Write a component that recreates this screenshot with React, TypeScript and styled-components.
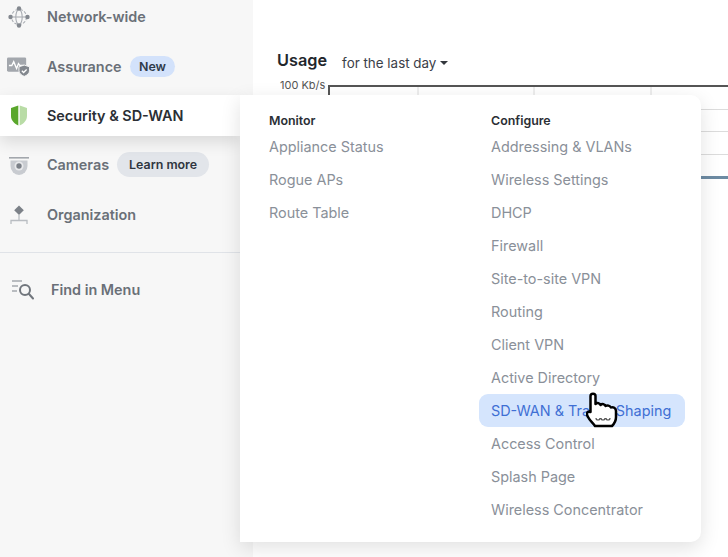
import styled, { createGlobalStyle } from "styled-components";

const GlobalStyle = createGlobalStyle`
  html, body {
    margin: 0;
    height: 100%;
    overflow: hidden;
    background: #fff;
    font-family: Inter, "Liberation Sans", sans-serif;
  }
`;

const monitorLinks = ["Appliance Status", "Rogue APs", "Route Table"];
const configureLinks = [
  "Addressing & VLANs",
  "Wireless Settings",
  "DHCP",
  "Firewall",
  "Site-to-site VPN",
  "Routing",
  "Client VPN",
  "Active Directory",
  "SD-WAN & Traffic Shaping",
  "Access Control",
  "Splash Page",
  "Wireless Concentrator",
];

const NetworkIcon = () => (
  <svg width="22" height="22" viewBox="0 0 22 22" fill="none" stroke="#a9adb3" strokeWidth="1.100">
    <circle cx="11" cy="11" r="7.500" strokeDasharray="3 1.500" />
    <ellipse cx="11" cy="11" rx="3.200" ry="7.500" />
    <path d="M3.500 11h15" />
    <g fill="#83888f" stroke="none">
      <circle cx="11" cy="2.500" r="2.200" />
      <circle cx="11" cy="19.500" r="2.200" />
      <circle cx="2.500" cy="11" r="2.200" />
      <circle cx="19.500" cy="11" r="2.200" />
    </g>
  </svg>
);

const AssuranceIcon = () => (
  <svg width="24" height="21" viewBox="0 0 24 21">
    <rect x="0" y="1" width="20" height="15" rx="1.500" fill="#a3a7ad" />
    <path d="M2 9.500h3l2-4 3 7 2-5 1.500 2H18" fill="none" stroke="#fff" strokeWidth="1.400" />
    <path d="M18 9l5.500 1.800V15c0 2.700-2.700 4.800-5.500 5.800-2.800-1-5.500-3.100-5.500-5.800v-4.200z" fill="#83888f" stroke="#f7f7f7" />
    <path d="M15.500 15l1.800 1.800 3.200-3.200" fill="none" stroke="#fff" strokeWidth="1.300" />
  </svg>
);

const ShieldIcon = () => (
  <svg width="18" height="21" viewBox="0 0 18 21">
    <path d="M8.300 0.500L1 3v8c0 4.500 3.500 7.800 7.300 9.500z" fill="#5aa72c" />
    <path d="M9.700 0.500L17 3v8c0 4.500-3.500 7.800-7.300 9.500z" fill="#b9dca6" />
  </svg>
);

const CameraIcon = () => (
  <svg width="20" height="20" viewBox="0 0 20 20">
    <rect x="0" y="2" width="20" height="1.600" fill="#a3a7ad" />
    <path d="M1.500 5.500h17v5.500a8.500 9 0 0 1-17 0z" fill="#c8cbd0" />
    <circle cx="10" cy="11" r="4.500" fill="#e8e9eb" />
    <circle cx="10" cy="11" r="2.700" fill="#7c8188" />
  </svg>
);

const OrganizationIcon = () => (
  <svg width="18" height="22" viewBox="0 0 18 22">
    <path d="M9 2.500l4.800 4.800L9 12.100 4.200 7.300z" fill="#7c8188" />
    <path d="M9 12v5M1 21v-3.500h16V21" fill="none" stroke="#b9bdc2" strokeWidth="1.300" />
  </svg>
);

const FindIcon = () => (
  <svg width="23" height="20" viewBox="0 0 23 20" fill="none">
    <path d="M1 1h10M1 6h6M1 11h5" stroke="#a5a9af" strokeWidth="1.300" />
    <circle cx="14" cy="10" r="5" stroke="#71767d" strokeWidth="2" />
    <path d="M18 14l4 4.500" stroke="#71767d" strokeWidth="2" strokeLinecap="round" />
  </svg>
);

const Caret = () => (
  <svg width="8" height="4" viewBox="0 0 8 4">
    <path d="M0 0h8L4 4z" fill="#33373d" />
  </svg>
);

const HandCursor = () => (
  <svg width="32" height="36" viewBox="0 0 32 36">
    <path
      d="M4.500 4C4.500 1 9.500 1 9.500 4V12C11 10.500 14 11 14.500 13C16 11.500 19 12 19.500 14C21 13 24 13.500 25 15.500C27 14.500 30 16 30 19V25C30 29 28 32 26 34H9C7 31 4 29 2 25C0 22 1 18.500 4.500 20Z"
      fill="#fff"
      stroke="#000"
      strokeWidth="2.500"
      strokeLinejoin="round"
    />
    <path d="M10 26a2 2 0 0 0 4 0M15 26a2 2 0 0 0 4 0M20 26a2 2 0 0 0 4 0" fill="none" stroke="#555" strokeWidth="1.200" />
  </svg>
);

const UsageChart = () => (
  <svg width="400" height="96" viewBox="0 0 400 96" fill="none">
    <path d="M1 96V1H400" stroke="#555" strokeWidth="2" />
    <path d="M90 2v92M206 2v92M323 2v92" stroke="#dcdcdc" />
    <path d="M2 24.500H400M2 46.500H400M2 69.500H400" stroke="#dcdcdc" />
    <path d="M2 92.500H400" stroke="#6d8ba3" strokeWidth="3" />
  </svg>
);

export default function App() {
  return (
    <Page>
      <GlobalStyle />
      <Sidebar>
        <NavItem>
          <NavIcon><NetworkIcon /></NavIcon>
          <NavLabel>Network-wide</NavLabel>
        </NavItem>
        <NavItem>
          <NavIcon><AssuranceIcon /></NavIcon>
          <NavLabel>Assurance</NavLabel>
          <NewBadge>New</NewBadge>
        </NavItem>
        <ActiveNavItem>
          <NavIcon><ShieldIcon /></NavIcon>
          <ActiveLabel>Security &amp; SD-WAN</ActiveLabel>
        </ActiveNavItem>
        <NavItem>
          <NavIcon><CameraIcon /></NavIcon>
          <NavLabel>Cameras</NavLabel>
          <LearnBadge>Learn more</LearnBadge>
        </NavItem>
        <NavItem>
          <NavIcon><OrganizationIcon /></NavIcon>
          <NavLabel>Organization</NavLabel>
        </NavItem>
        <Divider />
        <FindRow>
          <FindIcon />
          <NavLabel>Find in Menu</NavLabel>
        </FindRow>
      </Sidebar>

      <Main>
        <UsageHeader>
          <UsageTitle>Usage</UsageTitle>
          <RangeSelect>
            for the last day <Caret />
          </RangeSelect>
        </UsageHeader>
        <ChartRow>
          <AxisLabel>100 Kb/s</AxisLabel>
          <UsageChart />
        </ChartRow>
      </Main>

      <Flyout>
        <MenuColumn>
          <MenuHeading>Monitor</MenuHeading>
          {monitorLinks.map((link) => (
            <MenuLink key={link}>{link}</MenuLink>
          ))}
        </MenuColumn>
        <MenuColumn>
          <MenuHeading>Configure</MenuHeading>
          {configureLinks.map((link) => (
            <MenuLink key={link} $hover={link.startsWith("SD-WAN")}>
              {link}
            </MenuLink>
          ))}
        </MenuColumn>
      </Flyout>

      <CursorWrap>
        <HandCursor />
      </CursorWrap>
    </Page>
  );
}

const Page = styled.div`
  position: relative;
  display: flex;
  width: 728px;
  height: 557px;
  overflow: hidden;
  background: #fff;
`;

const Sidebar = styled.div`
  position: relative;
  width: 253px;
  flex: none;
  margin-top: -8px;
  background: #f7f7f7;
`;

const NavItem = styled.div`
  display: flex;
  align-items: center;
  height: 49.500px;
  padding-left: 7px;
  box-sizing: border-box;
`;

const ActiveNavItem = styled(NavItem)`
  position: relative;
  z-index: 2;
  width: 240px;
  height: 41px;
  margin: 4px 0;
  background: #fff;
  box-shadow: 0 6px 16px rgba(0, 0, 0, 0.12);
`;

const NavIcon = styled.span`
  display: flex;
  align-items: center;
  justify-content: center;
  width: 23px;
  margin-right: 17px;
`;

const NavLabel = styled.span`
  font-size: 14.400px;
  font-weight: 600;
  color: #6a7078;
`;

const ActiveLabel = styled(NavLabel)`
  color: #2b2f35;
`;

const NewBadge = styled.span`
  margin-left: 8px;
  padding: 0 9.500px;
  height: 21px;
  line-height: 21px;
  border-radius: 11px;
  background: #d3e2fb;
  font-size: 12.400px;
  font-weight: 600;
  color: #2f3a4a;
`;

const LearnBadge = styled.span`
  margin-left: 8px;
  padding: 0 12px;
  height: 25px;
  line-height: 25px;
  border-radius: 13px;
  background: #e2e5ea;
  font-size: 12.400px;
  font-weight: 600;
  color: #2f3640;
`;

const Divider = styled.div`
  height: 1px;
  margin-top: 13px;
  background: #e0e3e8;
`;

const FindRow = styled.div`
  display: flex;
  align-items: center;
  gap: 17px;
  height: 41px;
  margin-top: 16px;
  padding-left: 11px;
  background: linear-gradient(to right, #f7f7f7 240px, #fff 240px);
`;

const Main = styled.div`
  flex: 1;
  min-width: 0;
  padding: 50px 0 0 24px;
`;

const UsageHeader = styled.div`
  display: flex;
  align-items: flex-start;
  gap: 15px;
`;

const UsageTitle = styled.span`
  font-size: 16.300px;
  font-weight: 600;
  color: #22262b;
`;

const RangeSelect = styled.span`
  display: flex;
  align-items: center;
  gap: 4px;
  margin-top: 5px;
  font-size: 13.400px;
  color: #3b4048;
`;

const ChartRow = styled.div`
  display: flex;
  align-items: flex-start;
  margin-top: 7px;

  svg {
    margin-top: 7px;
  }
`;

const AxisLabel = styled.span`
  width: 47px;
  margin-right: 4px;
  padding-left: 3px;
  box-sizing: border-box;
  font-size: 11px;
  line-height: 14px;
  white-space: nowrap;
  color: #555;
`;

const Flyout = styled.div`
  position: absolute;
  z-index: 3;
  left: 240px;
  top: 95px;
  display: grid;
  grid-template-columns: 206px 206px;
  gap: 16px;
  width: 461px;
  height: 447px;
  box-sizing: border-box;
  padding: 17px 0 0 17px;
  background: #fff;
  border-radius: 0 10px 10px 0;
  box-shadow: 0 6px 20px rgba(0, 0, 0, 0.12);
`;

const MenuColumn = styled.div`
  display: flex;
  flex-direction: column;
`;

const MenuHeading = styled.div`
  height: 18px;
  padding-left: 12px;
  font-size: 12.400px;
  font-weight: 600;
  line-height: 18px;
  color: #2b2f35;
`;

const MenuLink = styled.div<{ $hover?: boolean }>`
  height: 33px;
  padding-left: 12px;
  border-radius: 9px;
  font-size: 14.400px;
  line-height: 33px;
  color: ${(p) => (p.$hover ? "#3f6fd4" : "#8a9099")};
  background: ${(p) => (p.$hover ? "#d5e5fd" : "transparent")};
`;

const CursorWrap = styled.div`
  position: absolute;
  z-index: 4;
  left: 586px;
  top: 392px;
  line-height: 0;
`;
